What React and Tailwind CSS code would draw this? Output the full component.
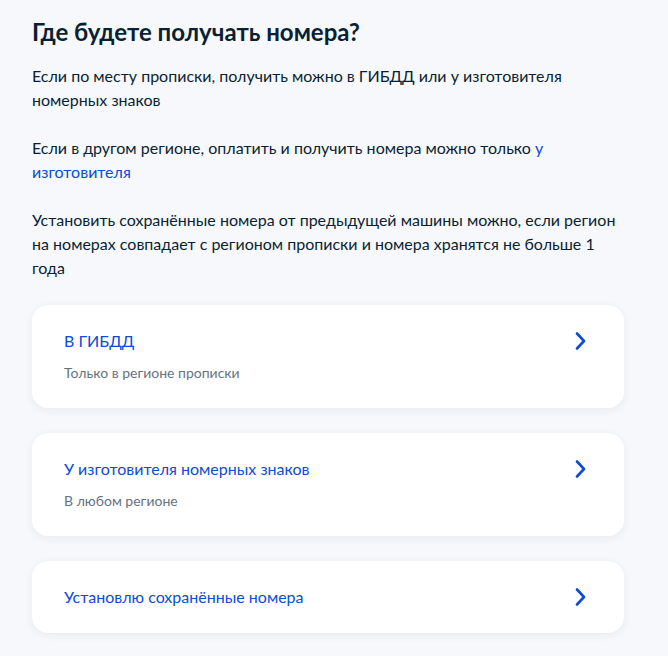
import React from 'react';

const Chevron = () => (
  <svg width="24" height="24" viewBox="0 0 24 24" fill="none" className="shrink-0">
    <path d="M9 4.5 L16 12 L9 19.5" stroke="#0d4cd3" strokeWidth="2.6" strokeLinecap="round" strokeLinejoin="round" />
  </svg>
);

const OptionCard = ({ title, hint }) => (
  <button
    className={
      hint
        ? 'w-full flex items-start justify-between text-left bg-white rounded-2xl px-8 pt-6 pb-[25px] shadow-[0_2px_8px_rgba(40,60,110,0.08)]'
        : 'w-full flex items-start justify-between text-left bg-white rounded-2xl px-8 pt-6 pb-6 shadow-[0_2px_8px_rgba(40,60,110,0.08)]'
    }
  >
    <div>
      <div className="text-base leading-6 text-[#0d4cd3]">{title}</div>
      {hint && <div className="mt-[10px] text-sm leading-5 text-[#66727f]">{hint}</div>}
    </div>
    <Chevron />
  </button>
);

export default function App() {
  return (
    <div className="min-h-screen bg-[#f6f8fb] font-['Lato',sans-serif] text-[#0b1f33]">
      <div className="w-[592px] ml-8 pt-[16px] pb-6">
        <h2 className="text-2xl leading-8 font-bold">Где будете получать номера?</h2>

        <div className="mt-4 space-y-6 text-base leading-6">
          <p>Если по месту прописки, получить можно в ГИБДД или у изготовителя номерных знаков</p>
          <p>
            Если в другом регионе, оплатить и получить номера можно только{' '}
            <a href="#" className="text-[#0d4cd3]">у изготовителя</a>
          </p>
          <p>
            Установить сохранённые номера от предыдущей машины можно, если регион на номерах совпадает с регионом прописки и номера хранятся не больше 1 года
          </p>
        </div>

        <div className="mt-[25px] space-y-[25px]">
          <OptionCard title="В ГИБДД" hint="Только в регионе прописки" />
          <OptionCard title="У изготовителя номерных знаков" hint="В любом регионе" />
          <OptionCard title="Установлю сохранённые номера" />
        </div>
      </div>
    </div>
  );
}
